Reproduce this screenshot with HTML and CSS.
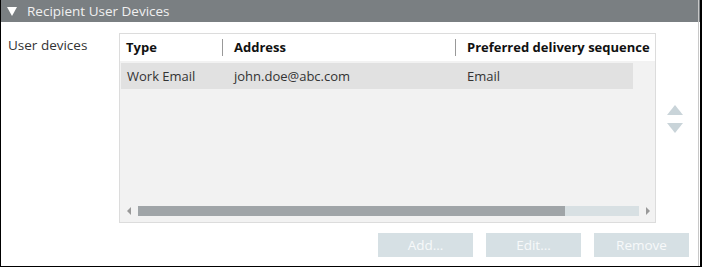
FILE: index.html
```html
<!DOCTYPE html>
<html lang="en">
<head>
  <meta charset="UTF-8">
  <title>Recipient User Devices</title>
  <link rel="stylesheet" href="styles.css">
</head>
<body>
  <div class="panel">
    <header class="panel-header">
      <span class="caret"></span>
      <span class="title">Recipient User Devices</span>
    </header>
    <div class="panel-body">
      <div class="label">User devices</div>
      <div class="table-wrap">
        <div class="grid">
          <div class="row head">
            <div class="cell c-type">Type</div>
            <div class="cell c-addr">Address</div>
            <div class="cell c-seq">Preferred delivery sequence</div>
          </div>
          <div class="row item">
            <div class="cell c-type">Work Email</div>
            <div class="cell c-addr">john.doe@abc.com</div>
            <div class="cell c-seq">Email</div>
          </div>
          <div class="filler"></div>
          <div class="hscroll">
            <span class="arrow left"></span>
            <div class="track"><div class="thumb"></div></div>
            <span class="arrow right"></span>
          </div>
        </div>
        <div class="order">
          <span class="up"></span>
          <span class="down"></span>
        </div>
      </div>
    </div>
    <div class="actions">
      <button>Add...</button>
      <button>Edit...</button>
      <button>Remove</button>
    </div>
  </div>
</body>
</html>
```

FILE: styles.css
```css
* {
  margin: 0;
  padding: 0;
  box-sizing: border-box;
}

body {
  font-family: 'Open Sans', sans-serif;
  font-size: 13px;
  color: #333;
  background: #fff;
}

.panel {
  width: 702px;
  height: 267px;
  border: 1px solid #000;
  border-top: none;
  border-right-width: 2px;
  display: flex;
  flex-direction: column;
  position: relative;
}

.panel::after {
  content: '';
  position: absolute;
  top: 0;
  bottom: 0;
  right: 1px;
  width: 1px;
  background: #c8c8c8;
}

.panel-header {
  height: 22px;
  background: #7a7f82;
  color: #f0f0f0;
  display: flex;
  align-items: center;
  gap: 10px;
  padding-left: 6px;
  font-size: 13.5px;
}

.caret {
  width: 0;
  height: 0;
  border-left: 5px solid transparent;
  border-right: 5px solid transparent;
  border-top: 9px solid #fff;
}

.panel-body {
  display: flex;
  padding-top: 11px;
}

.label {
  width: 118px;
  padding: 3px 0 0 7px;
  font-size: 13.5px;
}

.table-wrap {
  display: flex;
  gap: 11px;
}

.grid {
  width: 537px;
  height: 190px;
  border: 1px solid #dcdcdc;
  background: #f2f2f2;
  display: flex;
  flex-direction: column;
}

.row {
  display: flex;
  height: 27px;
  align-items: center;
}

.row.head {
  background: #fff;
  font-weight: bold;
  color: #111;
  padding-bottom: 1px;
}

.row.item {
  background: #e1e1e1;
  margin: 2px 22px 0 1px;
  height: 26px;
  padding-bottom: 1px;
}

.cell {
  padding-left: 6px;
  position: relative;
  white-space: nowrap;
}

.c-type { width: 108px; }
.c-addr { width: 233px; }
.c-seq { flex: 1; }

.row.item .c-type { width: 107px; }

.head .c-addr::before,
.head .c-seq::before {
  content: '';
  position: absolute;
  left: -6px;
  top: 1px;
  width: 1px;
  height: 17px;
  background: #999;
}

.filler {
  flex: 1;
}

.hscroll {
  display: flex;
  align-items: center;
  height: 12px;
  margin: 0 5px 5px 7px;
  gap: 7px;
}

.arrow {
  width: 0;
  height: 0;
  border-top: 4px solid transparent;
  border-bottom: 4px solid transparent;
}

.arrow.left { border-right: 4px solid #999; }
.arrow.right { border-left: 4px solid #999; }

.track {
  flex: 1;
  height: 10px;
  background: #d8e0e3;
}

.thumb {
  width: 427px;
  height: 10px;
  background: #a0a5a8;
}

.order {
  display: flex;
  flex-direction: column;
  gap: 8px;
  padding-top: 72px;
}

.order span {
  width: 0;
  height: 0;
  border-left: 8px solid transparent;
  border-right: 8px solid transparent;
}

.order .up { border-bottom: 10px solid #c9d4d9; }
.order .down { border-top: 10px solid #c9d4d9; }

.actions {
  display: flex;
  justify-content: flex-end;
  gap: 13px;
  padding: 10px 11px 0 0;
}

.actions button {
  width: 95px;
  height: 24px;
  border: none;
  background: #d6e0e4;
  color: #f7f9fa;
  font-family: 'Open Sans', sans-serif;
  font-size: 13.5px;
}
```
